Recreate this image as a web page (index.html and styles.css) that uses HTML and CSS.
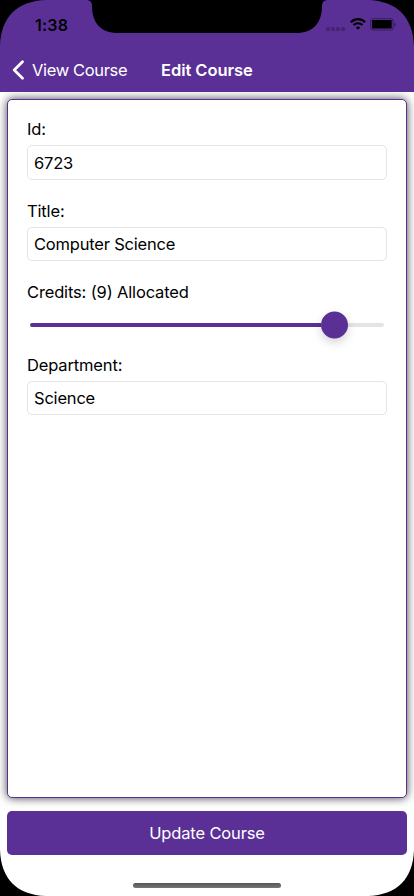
FILE: index.html
```html
<!DOCTYPE html>
<html lang="en">
<head>
<meta charset="utf-8">
<title>Edit Course</title>
<link rel="stylesheet" href="styles.css">
</head>
<body>
<div class="screen">
  <header class="header">
    <div class="status">
      <span class="time">1:38</span>
      <div class="indicators">
        <span class="cell"><i></i><i></i><i></i><i></i></span>
        <svg class="wifi" width="16" height="12" viewBox="0 0 16 12" fill="none" stroke="#000" stroke-width="2.1">
          <path d="M.9 4.200C4.800.1 11.200.1 15.100 4.200"/>
          <path d="M3.500 7.100c2.500-2.500 6.500-2.500 9 0"/>
          <path d="M8 11.700 5.800 9.400c1.200-1.100 3.200-1.100 4.400 0z" fill="#000" stroke="none"/>
        </svg>
        <svg class="battery" width="26" height="13" viewBox="0 0 26 13">
          <rect x=".6" y=".7" width="22.500" height="11.300" rx="2.500" fill="none" stroke="#000" stroke-opacity=".4"/>
          <rect x="2" y="2.100" width="19.700" height="8.500" rx=".8"/>
          <path d="M24.400 4.400v4c1.700-.7 1.700-3.300 0-4z" fill-opacity=".45"/>
        </svg>
      </div>
    </div>
    <nav class="nav">
      <a class="back">
        <svg width="13" height="20" viewBox="0 0 13 20" fill="none" stroke="#fff" stroke-width="2.700" stroke-linecap="round" stroke-linejoin="round"><path d="M10.500 1.800 2.200 10l8.300 8.200"/></svg>
        <span>View Course</span>
      </a>
      <h1 class="title">Edit Course</h1>
    </nav>
  </header>
  <main class="panel">
    <label class="field"><span class="label">Id:</span><input class="input" value="6723"></label>
    <label class="field"><span class="label">Title:</span><input class="input" value="Computer Science"></label>
    <div class="credits">
      <span class="label">Credits: (9) Allocated</span>
      <div class="slider"><div class="filled"></div><div class="thumb"></div><div class="rest"></div></div>
    </div>
    <label class="field"><span class="label">Department:</span><input class="input" value="Science"></label>
  </main>
  <button class="update"><span>Update Course</span></button>
  <div class="home"></div>
  <svg class="bezel" width="414" height="896" viewBox="0 0 414 896">
    <path d="M0 0H46C17 1 1 17 0 46zM414 0H368C397 1 413 17 414 46zM0 896V850C1 879 17 895 46 896zM414 896V850C413 879 397 895 368 896z"/>
    <path d="M86 0C90 0 92 2 92 6C92 23 101 33 118 33H296C313 33 322 23 322 6C322 2 324 0 328 0z"/>
  </svg>
</div>
</body>
</html>
```
FILE: styles.css
```css
* { box-sizing: border-box; }
body { margin: 0; font: 16.500px/20px Inter, sans-serif; color: #000; background: #fff; }
.screen { position: relative; width: 414px; height: 896px; display: flex; flex-direction: column; overflow: hidden; }
.header { height: 92px; flex: none; background: #5a3096; position: relative; z-index: 1; }
.status { height: 48px; display: flex; justify-content: space-between; padding: 15px 17px 0 35px; }
.time { font-size: 16px; font-weight: 600; letter-spacing: .2px; }
.indicators { display: flex; align-items: flex-start; }
.cell { display: flex; gap: 1px; padding-top: 12px; margin-right: 5px; }
.cell i { width: 4px; height: 4px; border-radius: 1.500px; background: rgba(0,0,0,.25); }
.wifi { margin: 3px 4px 0 0; }
.battery { margin: 3px 1px 0 0; }
.nav { height: 44px; display: flex; align-items: center; color: #fff; padding-left: 12px; }
.back { display: flex; align-items: center; gap: 7px; width: 149px; letter-spacing: -.35px; white-space: nowrap; }
.title { margin: 0; font-size: 16.500px; font-weight: 600; letter-spacing: -.05px; white-space: nowrap; }
.panel { height: 699px; flex: none; margin: 7px 7px 0; padding: 19.400px 19px 0; border: 1px solid #5a3096; border-radius: 5px; background: #fff; box-shadow: 0 0 10px rgba(0,0,0,.75); }
.field { display: block; height: 81.500px; }
.label { display: block; height: 26px; letter-spacing: -.15px; white-space: nowrap; }
.input { display: block; width: 360px; height: 34.300px; padding: 0 6px; border: 1px solid #e4e4e6; border-radius: 5px; background: #fff; font: 16.500px/20px Inter, sans-serif; letter-spacing: -.2px; color: #000; outline: 0; }
.credits { height: 72.600px; }
.slider { display: flex; align-items: center; height: 28px; padding: 0 3px; margin-top: 3px; }
.filled { width: 291px; height: 4px; border-radius: 2px 0 0 2px; background: #5a3096; }
.thumb { width: 27px; height: 27px; border-radius: 50%; background: #5a3096; box-shadow: 0 4px 10px rgba(0,0,0,.17); z-index: 1; transform: translateY(-.5px); }
.rest { flex: 1; height: 4px; border-radius: 0 2px 2px 0; background: #e4e4e6; }
.update { height: 44px; flex: none; margin: 13px 7px 0; border: 0; border-radius: 5px; background: #5a3096; color: #fff; font: 16.500px/20px Inter, sans-serif; letter-spacing: -.15px; }
.home { width: 148px; height: 5px; margin: 28px auto 0; border-radius: 3px; background: linear-gradient(#555, #777); }
.bezel { position: absolute; inset: 0; z-index: 2; pointer-events: none; }
```
